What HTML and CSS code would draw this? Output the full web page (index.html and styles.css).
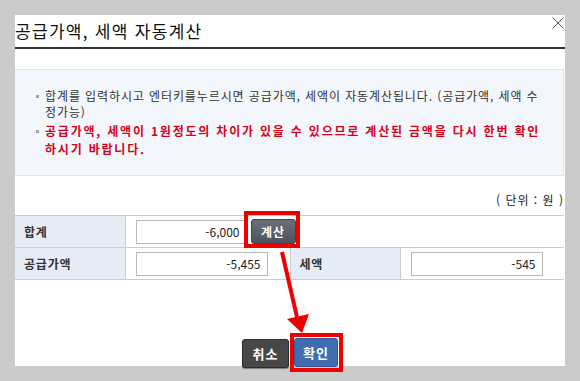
FILE: index.html
```html
<!DOCTYPE html>
<html lang="ko">
  <head>
    <meta charset="UTF-8" />
    <title>공급가액, 세액 자동계산</title>
    <link rel="stylesheet" href="styles.css">
  </head>
  <body>
    <div class="dialog">
      <div class="dlg-head">
        <h1>공급가액, 세액 자동계산</h1>
        <span class="close">
          <svg width="12" height="12" viewBox="0 0 12 12">
            <path d="M0.5 0.5 L11.5 11.5 M11.5 0.5 L0.5 11.5" stroke="#4e5566" stroke-width="1" fill="none" />
          </svg>
        </span>
      </div>

      <div class="notice">
        <ul>
          <li>합계를 입력하시고 엔터키를누르시면 공급가액, 세액이 자동계산됩니다. (공급가액, 세액 수<br>정가능)</li>
          <li class="warn">공급가액, 세액이 1원정도의 차이가 있을 수 있으므로 계산된 금액을 다시 한번 확인<br>하시기 바랍니다.</li>
        </ul>
      </div>

      <p class="unit">( 단위 : 원 )</p>

      <table class="calc">
        <colgroup>
          <col class="c-label" />
          <col class="c-value" />
          <col class="c-label" />
          <col class="c-value2" />
        </colgroup>
        <tr>
          <th>합계</th>
          <td colspan="3">
            <div class="sum-field">
              <input class="num num-sum" type="text" value="-6,000" />
              <button class="btn-calc" type="button">계산</button>
            </div>
          </td>
        </tr>
        <tr>
          <th>공급가액</th>
          <td><input class="num" type="text" value="-5,455" /></td>
          <th>세액</th>
          <td><input class="num" type="text" value="-545" /></td>
        </tr>
      </table>

      <div class="actions">
        <button class="btn btn-cancel" type="button">취소</button>
        <button class="btn btn-ok" type="button">확인</button>
      </div>

      <!-- 강조 표시 (빨간 박스, 화살표) -->
      <span class="mark mark-calc"></span>
      <span class="mark mark-ok"></span>
      <svg class="arrow" width="550" height="351" viewBox="0 0 550 351">
        <line x1="267" y1="237" x2="282" y2="302" stroke="#ee0000" stroke-width="4" />
        <polygon points="287,318 294,299 272,304" fill="#ee0000" />
      </svg>
    </div>
  </body>
</html>
```

FILE: styles.css
```css
* {
  margin: 0px;
  padding: 0px;
  box-sizing: border-box;
}

body {
  background-color: #cbcbcb;
  padding: 15px;
  font-family: "Noto Sans CJK KR", "Liberation Sans", sans-serif;
  font-size: 12px;
  color: #333;
}

.dialog {
  /* 팝업 본체 */
  position: relative;
  width: 550px;
  height: 351px;
  background-color: #fff;
}

.dlg-head {
  position: relative;
  height: 34px;
  border-bottom: 2px solid #333;
}

.dlg-head h1 {
  font-size: 17px;
  font-weight: normal;
  line-height: 32px;
  color: #111;
  letter-spacing: 1.3px;
}

.close {
  position: absolute;
  right: 1px;
  top: 2px;
  line-height: 0;
}

/* 안내 문구 */
.notice {
  margin-top: 20px;
  width: 549px;
  height: 107px;
  background-color: #f3f6fb;
  border: 1px solid #dde3ea;
  border-left: none;
  padding: 18px 0px 0px 30px;
}

.notice ul {
  list-style: none;
}

.notice li {
  position: relative;
  line-height: 16px;
  letter-spacing: 0.9px;
}

.notice li + li {
  margin-top: 2px;
}

.notice li::before {
  content: "";
  position: absolute;
  left: -9px;
  top: 7px;
  width: 3px;
  height: 3px;
  background-color: #a0a4aa;
}

.notice li.warn {
  color: #d7001b;
  font-weight: bold;
  line-height: 18px;
  letter-spacing: 1.8px;
}

.notice li.warn::before {
  top: 8px;
}

.unit {
  width: 549px;
  text-align: right;
  line-height: 16px;
  padding-top: 16px;
  margin-bottom: 7px;
  color: #222;
  letter-spacing: 1px;
}

/* 금액 입력 표 */
.calc {
  width: 549px;
  border-collapse: collapse;
  table-layout: fixed;
}

.c-label {
  width: 110px;
}

.c-value {
  width: 165px;
}

.c-value2 {
  width: 164px;
}

.calc th,
.calc td {
  height: 32px;
  border-top: 1px solid #c9ced6;
  border-bottom: 1px solid #c9ced6;
  vertical-align: middle;
}

.calc th {
  background-color: #e6ecf5;
  text-align: left;
  font-weight: bold;
  color: #333;
  padding-left: 9px;
  border-right: 1px solid #c9ced6;
  letter-spacing: 0.8px;
}

.calc td {
  padding-left: 10px;
  border-right: 1px solid #c9ced6;
}

.calc td:last-child {
  border-right: none;
}

.sum-field {
  display: flex;
  align-items: center;
  gap: 4px;
}

.num {
  display: block;
  width: 132px;
  height: 24px;
  border: 1px solid #b8b8b8;
  font-family: "Noto Sans CJK KR", "Liberation Sans", sans-serif;
  font-size: 12px;
  color: #222;
  text-align: right;
  padding-right: 6px;
  outline: none;
}

.num-sum {
  width: 111px;
}

.btn-calc {
  width: 45px;
  height: 25px;
  border: 1px solid #40454d;
  border-radius: 3px;
  background: linear-gradient(#6b717b, #4c525b);
  color: #fff;
  font-family: "Noto Sans CJK KR", sans-serif;
  font-size: 12px;
  font-weight: bold;
  letter-spacing: 1px;
}

/* 하단 버튼 */
.actions {
  display: flex;
  justify-content: center;
  align-items: flex-start;
  gap: 5px;
  margin-top: 58px;
}

.btn {
  height: 29px;
  border-radius: 3px;
  color: #fff;
  font-family: "Noto Sans CJK KR", sans-serif;
  font-size: 13px;
  font-weight: bold;
  letter-spacing: 1px;
}

.btn-cancel {
  width: 47px;
  margin-top: 1px;
  background-color: #474747;
  border: 1px solid #2b2b2b;
  box-shadow: 0px 1px 1px rgba(0, 0, 0, 0.4);
}

.btn-ok {
  width: 44px;
  background-color: #3f6db0;
  border: 1px solid #335a95;
}

/* 강조 표시 */
.mark {
  position: absolute;
  border: 4px solid #ee0000;
}

.mark-calc {
  left: 229px;
  top: 196px;
  width: 56px;
  height: 37px;
}

.mark-ok {
  left: 275px;
  top: 318px;
  width: 53px;
  height: 39px;
}

.arrow {
  position: absolute;
  left: 0px;
  top: 0px;
  pointer-events: none;
}
```
